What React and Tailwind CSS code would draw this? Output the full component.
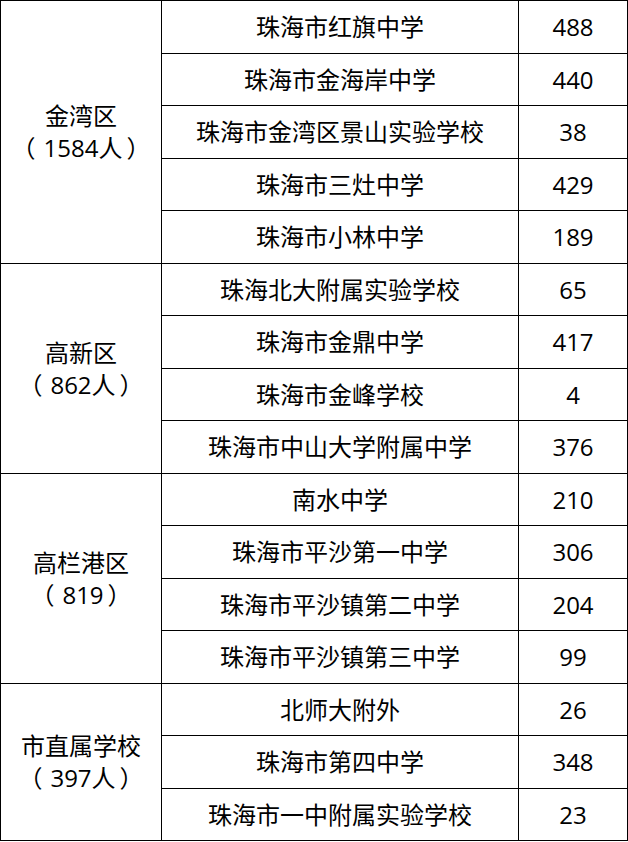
import React from 'react';

const groups = [
  {
    name: '金湾区',
    count: '1584人',
    schools: [
      ['珠海市红旗中学', '488'],
      ['珠海市金海岸中学', '440'],
      ['珠海市金湾区景山实验学校', '38'],
      ['珠海市三灶中学', '429'],
      ['珠海市小林中学', '189'],
    ],
  },
  {
    name: '高新区',
    count: '862人',
    schools: [
      ['珠海北大附属实验学校', '65'],
      ['珠海市金鼎中学', '417'],
      ['珠海市金峰学校', '4'],
      ['珠海市中山大学附属中学', '376'],
    ],
  },
  {
    name: '高栏港区',
    count: '819',
    schools: [
      ['南水中学', '210'],
      ['珠海市平沙第一中学', '306'],
      ['珠海市平沙镇第二中学', '204'],
      ['珠海市平沙镇第三中学', '99'],
    ],
  },
  {
    name: '市直属学校',
    count: '397人',
    schools: [
      ['北师大附外', '26'],
      ['珠海市第四中学', '348'],
      ['珠海市一中附属实验学校', '23'],
    ],
  },
];

const paren = { fontFamily: '"Noto Sans CJK SC", sans-serif' };

export default function App() {
  return (
    <div
      className="w-[628px] h-[842px] bg-white text-black text-[24px] leading-[31px]"
      style={{ fontFamily: '"Open Sans", "Noto Sans CJK SC", sans-serif' }}
    >
      <table className="border-collapse table-fixed w-[627px]">
        <colgroup>
          <col className="w-[161px]" />
          <col className="w-[357px]" />
          <col className="w-[109px]" />
        </colgroup>
        <tbody>
          {groups.map((g) =>
            g.schools.map(([school, num], i) => (
              <tr key={school} className="h-[52.5px]">
                {i === 0 && (
                  <td rowSpan={g.schools.length} className="border border-black text-center align-middle p-0">
                    <div>{g.name}</div>
                    <div>
                      <span className="mr-[8px]" style={paren}>（</span>
                      {g.count}
                      <span className="ml-[4px]" style={paren}>）</span>
                    </div>
                  </td>
                )}
                <td className="border border-black text-center align-middle p-0">{school}</td>
                <td className="border border-black text-center align-middle p-0">{num}</td>
              </tr>
            ))
          )}
        </tbody>
      </table>
    </div>
  );
}
